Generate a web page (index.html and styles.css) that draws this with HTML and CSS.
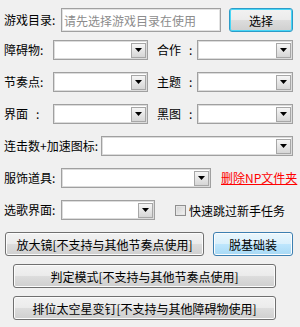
FILE: index.html
```html
<!DOCTYPE html>
<html lang="zh-CN">
<head>
    <meta charset="UTF-8">
    <meta name="viewport" content="width=device-width, initial-scale=1.0">
    <title>设置</title>
    <link rel="stylesheet" href="styles.css">
</head>
<body>
    <div class="panel">
        <div class="row center">
            <span class="label w57">游戏目录:</span>
            <input type="text" class="pathInput" placeholder="请先选择游戏目录在使用">
            <button type="button" class="btn focusBtn">选择</button>
        </div>

        <div class="row">
            <span class="label w49">障碍物:</span>
            <div class="combo w95"><span class="arrow"><svg width="7" height="4" viewBox="0 0 7 4"><polygon points="0,0 7,0 3.5,4" fill="#000"/></svg></span></div>
            <span class="label right">合作<span class="colon">:</span></span>
            <div class="combo w96"><span class="arrow"><svg width="7" height="4" viewBox="0 0 7 4"><polygon points="0,0 7,0 3.5,4" fill="#000"/></svg></span></div>
        </div>

        <div class="row">
            <span class="label w49">节奏点:</span>
            <div class="combo w95"><span class="arrow"><svg width="7" height="4" viewBox="0 0 7 4"><polygon points="0,0 7,0 3.5,4" fill="#000"/></svg></span></div>
            <span class="label right">主题<span class="colon">:</span></span>
            <div class="combo w96"><span class="arrow"><svg width="7" height="4" viewBox="0 0 7 4"><polygon points="0,0 7,0 3.5,4" fill="#000"/></svg></span></div>
        </div>

        <div class="row">
            <span class="label w49">界面<span class="colon">:</span></span>
            <div class="combo w95"><span class="arrow"><svg width="7" height="4" viewBox="0 0 7 4"><polygon points="0,0 7,0 3.5,4" fill="#000"/></svg></span></div>
            <span class="label right">黑图<span class="colon">:</span></span>
            <div class="combo w96"><span class="arrow"><svg width="7" height="4" viewBox="0 0 7 4"><polygon points="0,0 7,0 3.5,4" fill="#000"/></svg></span></div>
        </div>

        <div class="row">
            <span class="label w97">连击数+加速图标:</span>
            <div class="combo w192"><span class="arrow"><svg width="7" height="4" viewBox="0 0 7 4"><polygon points="0,0 7,0 3.5,4" fill="#000"/></svg></span></div>
        </div>

        <div class="row">
            <span class="label w57">服饰道具:</span>
            <div class="combo w150"><span class="arrow"><svg width="7" height="4" viewBox="0 0 7 4"><polygon points="0,0 7,0 3.5,4" fill="#000"/></svg></span></div>
            <a href="#" class="deleteLink">删除NP文件夹</a>
        </div>

        <div class="row">
            <span class="label w57">选歌界面:</span>
            <div class="combo w94"><span class="arrow"><svg width="7" height="4" viewBox="0 0 7 4"><polygon points="0,0 7,0 3.5,4" fill="#000"/></svg></span></div>
            <label class="check"><span class="checkBox"></span>快速跳过新手任务</label>
        </div>

        <div class="row buttons first">
            <button type="button" class="btn wide1">放大镜[不支持与其他节奏点使用]</button>
            <button type="button" class="btn blueBtn">脱基础装</button>
        </div>

        <div class="row buttons">
            <button type="button" class="btn wide2">判定模式[不支持与其他节奏点使用]</button>
        </div>

        <div class="row buttons">
            <button type="button" class="btn wide2">排位太空星变钉[不支持与其他障碍物使用]</button>
        </div>
    </div>
</body>
</html>
```

FILE: styles.css
```css
body {
    font-family: "Noto Sans CJK SC", "Liberation Sans", sans-serif;
    font-size: 12px;
    color: #000;
    background-color: #f0f0f0;
    margin: 0;
    padding: 0;
}

.panel {
    display: flex;
    flex-direction: column;
    gap: 8px;
    padding: 8px 0 0 4px;
}

.row {
    display: flex;
    align-items: flex-start;
    height: 24px;
}

.row.center {
    align-items: center;
}

.label {
    flex: none;
    line-height: 20px;
    white-space: nowrap;
}

.row.center .label {
    line-height: 24px;
}

.w49 { width: 49px; }
.w57 { width: 57px; }
.w97 { width: 97px; }

.label.right {
    width: 40px;
    padding-left: 9px;
}

.colon {
    margin-left: 8px;
}

.pathInput {
    width: 160px;
    height: 24px;
    box-sizing: border-box;
    margin: 0;
    padding: 0 2px;
    border: 1px solid #a0a0a0;
    box-shadow: inset 0 0 0 1px #e2e2e2;
    background-color: #fff;
    font-family: inherit;
    font-size: 12px;
}

.pathInput::placeholder {
    color: #8c8c8c;
}

.combo {
    flex: none;
    display: flex;
    justify-content: flex-end;
    align-items: center;
    height: 20px;
    box-sizing: border-box;
    padding: 0 1px;
    border: 1px solid #a0a0a0;
    box-shadow: inset 0 0 0 1px #dcdcdc;
    background-color: #fff;
}

.w94 { width: 94px; }
.w95 { width: 95px; }
.w96 { width: 96px; }
.w150 { width: 150px; }
.w192 { width: 192px; }

.arrow {
    display: flex;
    justify-content: center;
    align-items: center;
    width: 15px;
    height: 15px;
    box-sizing: border-box;
    border: 1px solid #a7a7a7;
    background: linear-gradient(#f6f6f6, #d6d6d6);
}

.deleteLink {
    margin-left: 10px;
    line-height: 20px;
    color: #ff0000;
    text-decoration: underline;
}

.check {
    display: flex;
    align-items: center;
    height: 20px;
    margin-left: 20px;
    gap: 3px;
    font-size: 12px;
}

.checkBox {
    width: 11px;
    height: 11px;
    box-sizing: border-box;
    border: 1px solid #8f8f8f;
    background: linear-gradient(135deg, #cfcfcf, #f4f4f4);
    box-shadow: inset 0 0 0 1px #e6e6e6;
}

.btn {
    flex: none;
    height: 24px;
    margin: 0;
    padding: 0;
    border: 1px solid #707070;
    border-radius: 3px;
    background: linear-gradient(#f2f2f2 0%, #ebebeb 50%, #dddddd 50%, #cfcfcf 100%);
    box-shadow: inset 0 0 0 1px #fcfcfc;
    font-family: inherit;
    font-size: 12px;
    color: #000;
    cursor: pointer;
}

.focusBtn {
    width: 64px;
    margin-left: 8px;
    border-color: #2c9cc8;
    box-shadow: inset 0 0 0 1px #48d6f6;
}

.buttons.first {
    margin-left: 1px;
    gap: 9px;
}

.wide1 { width: 199px; }

.blueBtn {
    width: 80px;
    border-color: #3c7fb1;
    background: linear-gradient(#eaf6fd 0%, #d9f0fc 50%, #bee6fd 50%, #a7d9f5 100%);
}

.wide2 {
    width: 263px;
    margin-left: 9px;
}
```
